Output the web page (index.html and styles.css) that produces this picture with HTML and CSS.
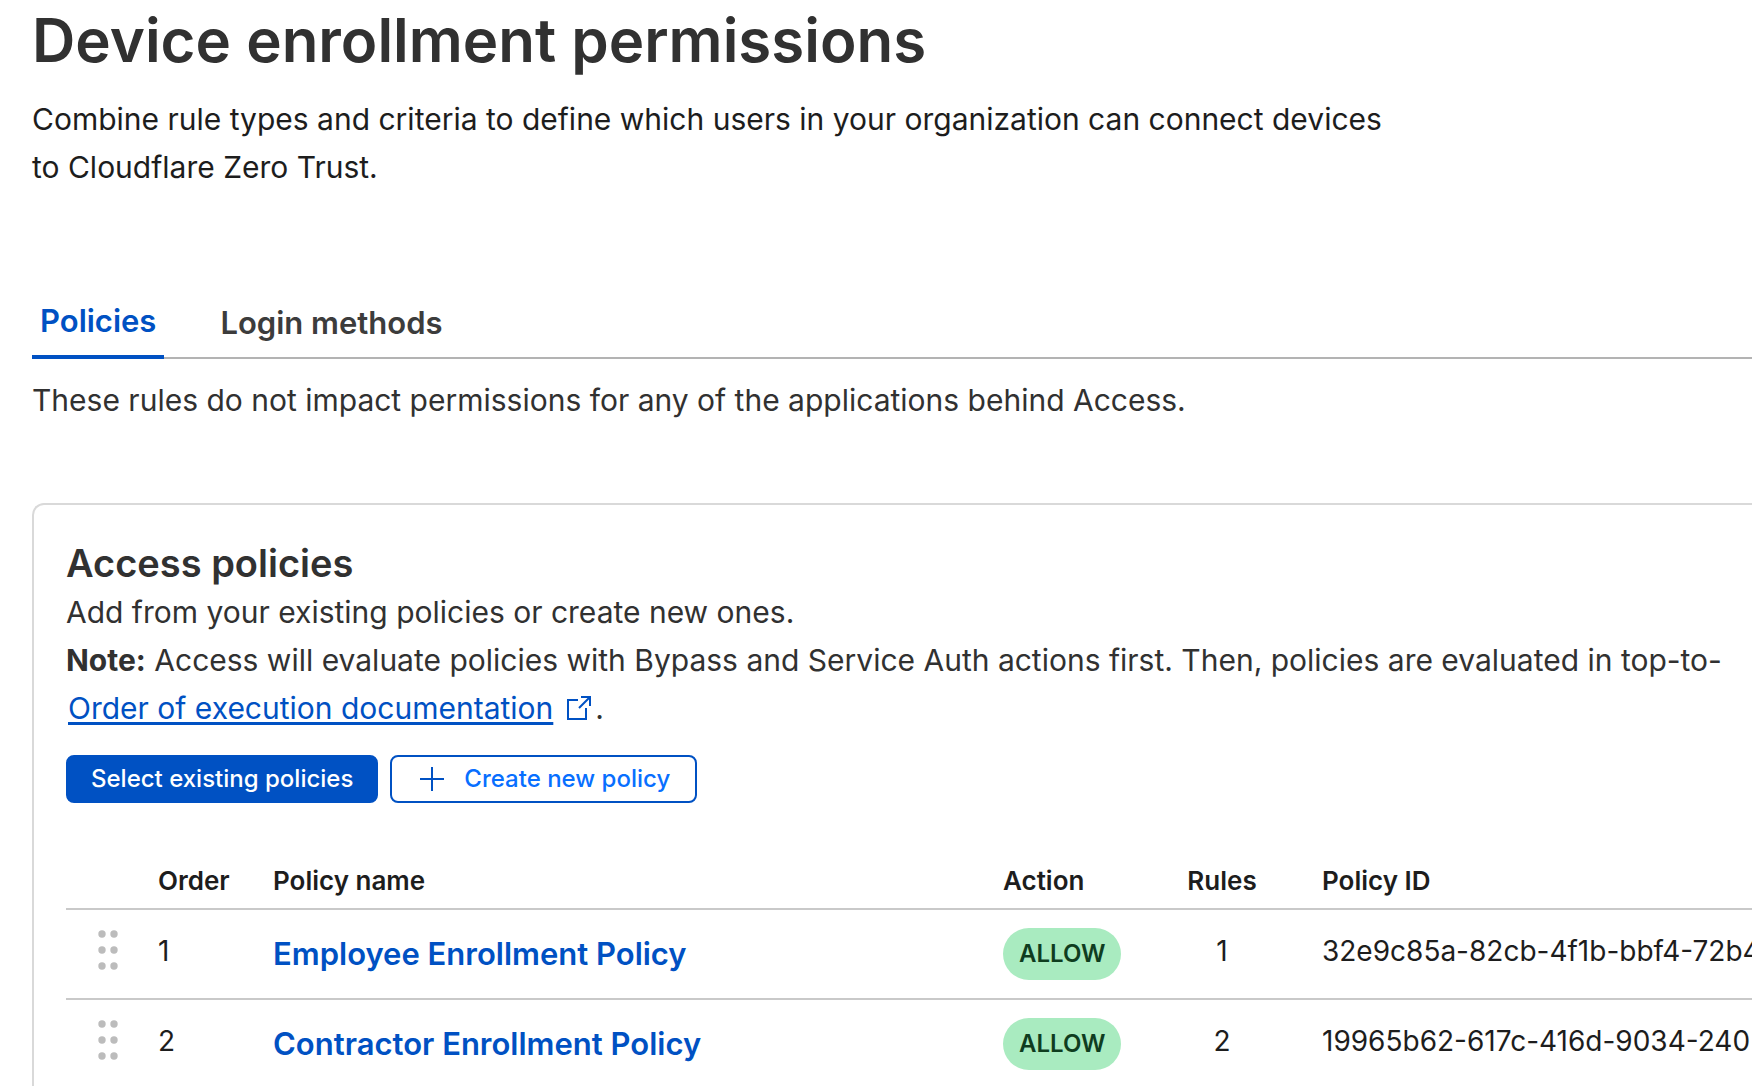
FILE: index.html
```html
<!DOCTYPE html>
<html lang="en">
<head>
<meta charset="utf-8">
<title>Device enrollment permissions</title>
<link rel="stylesheet" href="styles.css">
</head>
<body>
<main class="page">
  <header class="page-header">
    <h1 class="page-title">Device enrollment permissions</h1>
    <p class="page-intro">Combine rule types and criteria to define which users in your organization can connect devices to Cloudflare Zero Trust.</p>
  </header>

  <nav class="tabs" aria-label="Sections">
    <a class="tab tab-active" href="#policies" aria-current="page">Policies</a>
    <a class="tab" href="#login-methods">Login methods</a>
  </nav>

  <p class="tab-note">These rules do not impact permissions for any of the applications behind Access.</p>

  <section class="card" id="policies">
    <h2 class="card-title">Access policies</h2>
    <p class="card-text">Add from your existing policies or create new ones.</p>
    <p class="card-text"><strong>Note:</strong> Access will evaluate policies with Bypass and Service Auth actions first. Then, policies are evaluated in top-to-</p>
    <p class="card-text"><a class="doc-link" href="#order"><span class="doc-link-label">Order of execution documentation</span><svg class="icon-external" viewBox="0 0 24 24" aria-hidden="true"><path d="M11 4H1v19h18V12M14 1h9v9M23 1L12 12"/></svg></a>.</p>

    <div class="actions">
      <button class="button button-primary" type="button">Select existing policies</button>
      <button class="button button-outline" type="button"><svg class="icon-plus" viewBox="0 0 24 24" aria-hidden="true"><path d="M12 0v24M0 12h24"/></svg>Create new policy</button>
    </div>

    <table class="policies">
      <colgroup>
        <col class="col-drag"><col class="col-order"><col class="col-name"><col class="col-action"><col class="col-rules"><col>
      </colgroup>
      <thead>
        <tr><td></td><th scope="col">Order</th><th scope="col">Policy name</th><th scope="col">Action</th><th scope="col" class="rules">Rules</th><th scope="col">Policy ID</th></tr>
      </thead>
      <tbody>
        <tr>
          <td class="drag"><svg class="icon-drag" viewBox="0 0 20 40" aria-hidden="true"><circle cx="4" cy="4" r="3.7"/><circle cx="16" cy="4" r="3.7"/><circle cx="4" cy="20" r="3.7"/><circle cx="16" cy="20" r="3.7"/><circle cx="4" cy="36" r="3.7"/><circle cx="16" cy="36" r="3.7"/></svg></td>
          <td>1</td>
          <td class="name"><a class="policy-link" href="#employee">Employee Enrollment Policy</a></td>
          <td class="action"><span class="badge">ALLOW</span></td>
          <td class="rules">1</td>
          <td>32e9c85a-82cb-4f1b-bbf4-72b4</td>
        </tr>
        <tr>
          <td class="drag"><svg class="icon-drag" viewBox="0 0 20 40" aria-hidden="true"><circle cx="4" cy="4" r="3.7"/><circle cx="16" cy="4" r="3.7"/><circle cx="4" cy="20" r="3.7"/><circle cx="16" cy="20" r="3.7"/><circle cx="4" cy="36" r="3.7"/><circle cx="16" cy="36" r="3.7"/></svg></td>
          <td>2</td>
          <td class="name"><a class="policy-link" href="#contractor">Contractor Enrollment Policy</a></td>
          <td class="action"><span class="badge">ALLOW</span></td>
          <td class="rules">2</td>
          <td>19965b62-617c-416d-9034-240</td>
        </tr>
      </tbody>
    </table>
  </section>
</main>
</body>
</html>
```
FILE: styles.css
```css
* {
  box-sizing: border-box;
}

body {
  margin: 0;
  overflow-x: hidden;
  background: #fff;
  color: #313131;
  font-family: Inter, "Liberation Sans", sans-serif;
  font-size: 30px;
  line-height: 48px;
}

h1, h2, p {
  margin: 0;
}

.page {
  padding-left: 32px;
}

.page-title {
  font-size: 60px;
  font-weight: 600;
  line-height: 80px;
}

.page-intro {
  max-width: 1380px;
  margin-top: 15px;
  color: #1d1d1d;
}

.tabs {
  display: flex;
  gap: 48px;
  margin-top: 100px;
  box-shadow: inset 0 -2px #b3b3b3;
}

.tab {
  padding: 8px 8px 12px;
  color: #3c3c3c;
  font-size: 31px;
  font-weight: 600;
  text-decoration: none;
}

.tab-active {
  padding-top: 6px;
  padding-bottom: 10px;
  border-bottom: 4px solid #0051c3;
  color: #0051c3;
}

.tab-note {
  margin-top: 17px;
}

.card {
  margin-top: 79px;
  padding: 33px 0 32px 32px;
  border: 2px solid #d9d9d9;
  border-right: 0;
  border-radius: 12px 0 0 0;
}

.card-title {
  font-size: 38px;
  font-weight: 600;
  line-height: 50px;
}

.card-text {
  white-space: nowrap;
}

.doc-link {
  display: inline-flex;
  align-items: center;
  gap: 14px;
  margin: 0 4px 0 2px;
  color: #0051c3;
  text-decoration: none;
}

.doc-link-label {
  text-decoration: underline;
  text-decoration-thickness: 3px;
  text-underline-offset: 3px;
}

.icon-external {
  width: 24px;
  height: 24px;
  fill: none;
  stroke: currentColor;
  stroke-width: 2;
}

.actions {
  display: flex;
  gap: 12px;
  margin-top: 23px;
}

.button {
  display: flex;
  align-items: center;
  justify-content: center;
  height: 48px;
  border: 2px solid #0051c3;
  border-radius: 8px;
  font: 500 24px/32px Inter, "Liberation Sans", sans-serif;
}

.button-primary {
  padding: 0 23px;
  background: #0051c3;
  color: #fff;
}

.button-outline {
  gap: 20px;
  padding: 0 25px 0 28px;
  background: #fff;
  color: #086fff;
}

.icon-plus {
  width: 24px;
  height: 24px;
  fill: none;
  stroke: #0051c3;
  stroke-width: 2;
}

.policies {
  width: 100%;
  margin-top: 48px;
  border-collapse: collapse;
  table-layout: fixed;
  color: #1d1d1d;
  font-size: 28px;
  line-height: 32px;
  white-space: nowrap;
}

.col-drag { width: 92px; }
.col-order { width: 115px; }
.col-name { width: 730px; }
.col-action { width: 175px; }
.col-rules { width: 144px; }

.policies tr {
  border-bottom: 2px solid #c9c9c9;
}

.policies th,
.policies td {
  padding: 0;
  text-align: left;
}

.policies th {
  height: 58px;
  padding-top: 2px;
  font-size: 26px;
  font-weight: 600;
}

.policies td {
  padding-bottom: 6px;
}

.policies tbody tr {
  height: 90px;
}

.policies td.name,
.policies td.action {
  padding-bottom: 0;
}

.policies .rules {
  padding-right: 56px;
  text-align: center;
}

.policies .drag {
  padding-left: 32px;
  padding-bottom: 8px;
}

.icon-drag {
  display: block;
  width: 20px;
  height: 40px;
  fill: #bcbcbc;
}

.policy-link {
  color: #0051c3;
  font-size: 31px;
  font-weight: 600;
  text-decoration: none;
}

.badge {
  display: inline-flex;
  align-items: center;
  justify-content: center;
  padding: 10px 16px;
  border-radius: 26px;
  background: #a9ebc0;
  color: #0f3d1f;
  font-size: 24px;
  font-weight: 600;
  vertical-align: middle;
}
```
